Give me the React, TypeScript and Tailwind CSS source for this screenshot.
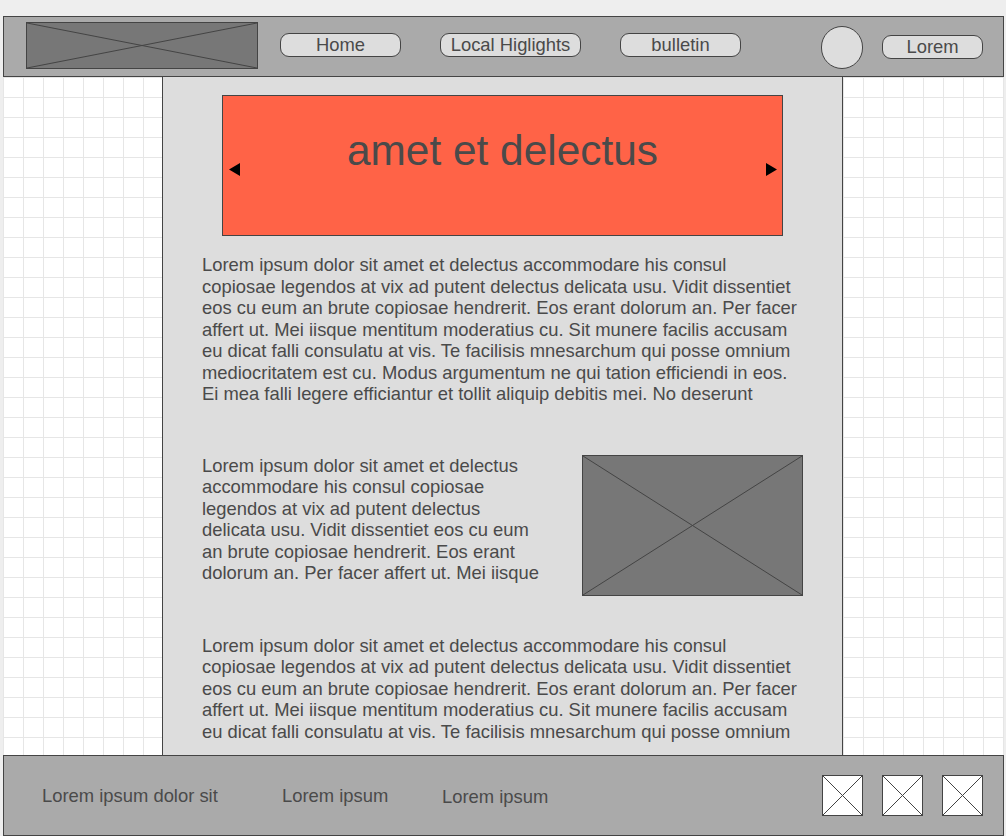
import { ReactNode } from 'react'

const TEXT_A =
    'Lorem ipsum dolor sit amet et delectus accommodare his consul copiosae legendos at vix ad putent delectus delicata usu. Vidit dissentiet eos cu eum an brute copiosae hendrerit. Eos erant dolorum an. Per facer affert ut. Mei iisque mentitum moderatius cu. Sit munere facilis accusam eu dicat falli consulatu at vis. Te facilisis mnesarchum qui posse omnium mediocritatem est cu. Modus argumentum ne qui tation efficiendi in eos. Ei mea falli legere efficiantur et tollit aliquip debitis mei. No deserunt'

const TEXT_B =
    'Lorem ipsum dolor sit amet et delectus accommodare his consul copiosae legendos at vix ad putent delectus delicata usu. Vidit dissentiet eos cu eum an brute copiosae hendrerit. Eos erant dolorum an. Per facer affert ut. Mei iisque'

const TEXT_C =
    'Lorem ipsum dolor sit amet et delectus accommodare his consul copiosae legendos at vix ad putent delectus delicata usu. Vidit dissentiet eos cu eum an brute copiosae hendrerit. Eos erant dolorum an. Per facer affert ut. Mei iisque mentitum moderatius cu. Sit munere facilis accusam eu dicat falli consulatu at vis. Te facilisis mnesarchum qui posse omnium'

// image placeholder: box with a cross drawn corner to corner
const Placeholder = ({ className, stroke = '#444444' }: { className: string; stroke?: string }) => (
    <div className={`relative border border-[#444444] ${className}`}>
        <svg className="absolute inset-0 w-full h-full" viewBox="0 0 100 100" preserveAspectRatio="none">
            <line x1="0" y1="0" x2="100" y2="100" stroke={stroke} strokeWidth="1" vectorEffect="non-scaling-stroke" />
            <line x1="100" y1="0" x2="0" y2="100" stroke={stroke} strokeWidth="1" vectorEffect="non-scaling-stroke" />
        </svg>
    </div>
)

const NavButton = ({ children, className }: { children: ReactNode; className: string }) => (
    <div className={`h-[24px] rounded-[9px] border border-[#444444] bg-[#dddddd] flex items-center justify-center leading-[22px] ${className}`}>
        {children}
    </div>
)

export default function App() {
    return (
        <div className="w-[1006px] h-[836px] bg-[#eeeeee] pt-[16px] flex flex-col font-['Liberation_Sans',Arial,sans-serif] text-[18.4px] text-[#4a4a4a] overflow-hidden">
            {/* header */}
            <div className="ml-[3px] w-[1001px] h-[61px] shrink-0 bg-[#aaaaaa] border border-[#444444] flex items-start">
                <Placeholder className="ml-[22px] mt-[5px] w-[232px] h-[47px] bg-[#777777]" />
                <NavButton className="ml-[22px] mt-[16px] w-[121px]">Home</NavButton>
                <NavButton className="ml-[39px] mt-[16px] w-[141px]">Local Higlights</NavButton>
                <NavButton className="ml-[39px] mt-[16px] w-[121px]">bulletin</NavButton>
                <div className="ml-[80px] mt-[9px] w-[42px] h-[43px] rounded-full border border-[#444444] bg-[#dddddd]" />
                <NavButton className="ml-[19px] mt-[18px] w-[101px]">Lorem</NavButton>
            </div>

            {/* grid canvas */}
            <div className="ml-[3px] w-[1001px] flex-1 min-h-0 bg-white bg-[linear-gradient(to_right,#e6e6e6_1px,transparent_1px),linear-gradient(to_bottom,#e6e6e6_1px,transparent_1px)] bg-[size:20px_20px]">
                <div className="ml-[159px] w-[681px] h-full bg-[#dddddd] border-x border-[#444444] pt-[18px] overflow-hidden">
                    <div className="relative ml-[59px] w-[561px] h-[141px] bg-[#ff6347] border border-[#444444] pt-[31px]">
                        <div className="text-center text-[42.4px] leading-[48px]">amet et delectus</div>
                        <svg className="absolute left-[6px] top-[67px] w-[11px] h-[13px]" viewBox="0 0 11 13">
                            <polygon points="11,0 11,13 0,6.5" fill="#000" />
                        </svg>
                        <svg className="absolute right-[5px] top-[67px] w-[11px] h-[13px]" viewBox="0 0 11 13">
                            <polygon points="0,0 0,13 11,6.5" fill="#000" />
                        </svg>
                    </div>

                    <div className="pl-[39px] w-[640px]">
                        <p className="mt-[18px] leading-[21.5px]">{TEXT_A}</p>

                        <div className="mt-[50px] flex items-start justify-between">
                            <p className="w-[342px] leading-[21.5px]">{TEXT_B}</p>
                            <Placeholder className="w-[221px] h-[141px] bg-[#777777]" />
                        </div>

                        <p className="mt-[39px] leading-[21.5px]">{TEXT_C}</p>
                    </div>
                </div>
            </div>

            {/* footer */}
            <div className="ml-[3px] w-[1001px] h-[81px] shrink-0 bg-[#aaaaaa] border border-[#444444] flex items-center">
                <div className="ml-[38px] w-[240px]">Lorem ipsum dolor sit</div>
                <div className="w-[160px]">Lorem ipsum</div>
                <div className="mt-[2px]">Lorem ipsum</div>
                <div className="ml-auto mr-[20px] flex gap-[19px]">
                    <Placeholder className="w-[41px] h-[41px] bg-white" />
                    <Placeholder className="w-[41px] h-[41px] bg-white" />
                    <Placeholder className="w-[41px] h-[41px] bg-white" />
                </div>
            </div>
        </div>
    )
}
